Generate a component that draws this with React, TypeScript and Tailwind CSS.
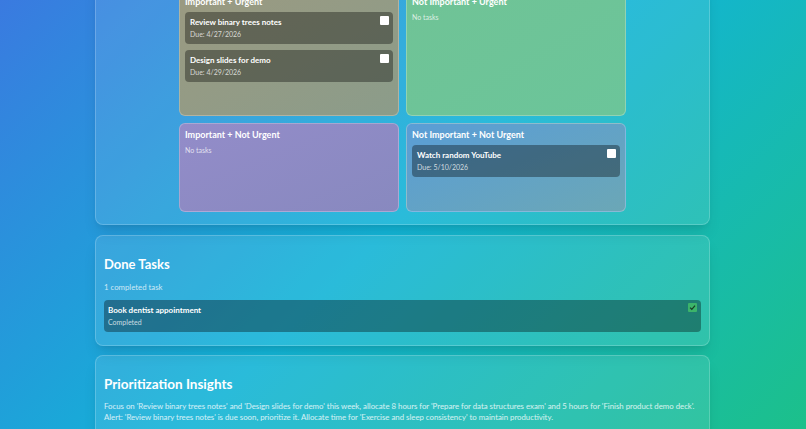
import React from "react";

interface Task {
  title: string;
  due: string;
}

interface Quadrant {
  title: string;
  tasks: Task[];
  bg: string;
}

const quadrants: Quadrant[] = [
  {
    title: "Important + Urgent",
    tasks: [
      { title: "Review binary trees notes", due: "4/27/2026" },
      { title: "Design slides for demo", due: "4/29/2026" },
    ],
    bg: "bg-gradient-to-br from-[#9b9a81] to-[#8b9c8a]",
  },
  {
    title: "Not Important + Urgent",
    tasks: [],
    bg: "bg-gradient-to-br from-[#70c396] to-[#6bc59a]",
  },
  {
    title: "Important + Not Urgent",
    tasks: [],
    bg: "bg-gradient-to-br from-[#938cc9] to-[#8889bf]",
  },
  {
    title: "Not Important + Not Urgent",
    tasks: [{ title: "Watch random YouTube", due: "5/10/2026" }],
    bg: "bg-gradient-to-br from-[#5a9dd6] to-[#6ba7b6]",
  },
];

function Checkbox({ checked = false }: { checked?: boolean }) {
  if (checked) {
    return (
      <span className="flex h-[9px] w-[9px] shrink-0 items-center justify-center rounded-[1px] bg-[#3cb46a]">
        <svg viewBox="0 0 10 10" className="h-[7px] w-[7px]">
          <path d="M1.5 5.2 L4 7.6 L8.6 2.4" fill="none" stroke="#173d24" strokeWidth="1.8" />
        </svg>
      </span>
    );
  }
  return <span className="block h-[9px] w-[9px] shrink-0 rounded-[1px] bg-white" />;
}

function TaskCard({ task }: { task: Task }) {
  return (
    <div className="flex items-start justify-between rounded-[4px] bg-black/35 pb-[5px] pl-[5px] pr-[4px] pt-[5px]">
      <div>
        <p className="text-[8px] font-bold leading-[10px] text-white">{task.title}</p>
        <p className="mt-[3px] text-[7px] leading-[9px] text-white/75">Due: {task.due}</p>
      </div>
      <span className="-mt-[1px]">
        <Checkbox />
      </span>
    </div>
  );
}

function QuadrantBox({ quadrant }: { quadrant: Quadrant }) {
  return (
    <div className={`rounded-[6px] border border-white/25 px-[5px] pt-[5px] ${quadrant.bg}`}>
      <h3 className="mb-[5px] text-[9px] font-bold leading-[11px] text-white">{quadrant.title}</h3>
      {quadrant.tasks.length === 0 ? (
        <p className="text-[7px] leading-[10px] text-white/75">No tasks</p>
      ) : (
        <div className="flex flex-col gap-[6px]">
          {quadrant.tasks.map((task) => (
            <TaskCard key={task.title} task={task} />
          ))}
        </div>
      )}
    </div>
  );
}

export default function App() {
  return (
    <div
      className="h-screen overflow-hidden bg-[linear-gradient(135deg,#3a7ae0_0%,#12b4d6_50%,#1cc08a_100%)] text-white"
      style={{ fontFamily: "Lato, 'Noto Sans', sans-serif" }}
    >
      <div className="ml-[95px] w-[615px]">
        {/* matrix panel, scrolled past its heading */}
        <section className="-mt-[24px] rounded-[8px] border border-white/20 bg-white/10 pb-[12px] pt-[13px] shadow-lg">
          <div className="mx-auto grid w-[447px] grid-cols-2 grid-rows-[126px_89px] gap-[7px]">
            {quadrants.map((q) => (
              <QuadrantBox key={q.title} quadrant={q} />
            ))}
          </div>
        </section>

        <section className="mt-[10px] rounded-[8px] border border-white/20 bg-white/10 px-[8px] pb-[13px] pt-[20px] shadow-lg">
          <h2 className="text-[13px] font-bold leading-[16px]">Done Tasks</h2>
          <p className="mt-[10px] text-[7.8px] leading-[10px] text-white/75">1 completed task</p>
          <div className="mt-[8px] flex items-start justify-between rounded-[4px] bg-black/35 pb-[5px] pl-[4px] pr-[4px] pt-[5px]">
            <div>
              <p className="text-[8px] font-bold leading-[10px]">Book dentist appointment</p>
              <p className="mt-[3px] text-[7px] leading-[9px] text-white/75">Completed</p>
            </div>
            <span className="-mt-[2px]">
              <Checkbox checked />
            </span>
          </div>
        </section>

        <section className="mt-[9px] rounded-[8px] border border-white/20 bg-white/10 px-[8px] pb-[14px] pt-[20px] shadow-lg">
          <h2 className="text-[13.5px] font-bold leading-[16px]">Prioritization Insights</h2>
          <p className="mt-[9px] text-[7.8px] leading-[11px] text-white/80">
            Focus on 'Review binary trees notes' and 'Design slides for demo' this week, allocate 8 hours for
            'Prepare for data structures exam' and 5 hours for 'Finish product demo deck'. Alert: 'Review binary
            trees notes' is due soon, prioritize it. Allocate time for 'Exercise and sleep consistency' to maintain
            productivity.
          </p>
        </section>
      </div>
    </div>
  );
}
